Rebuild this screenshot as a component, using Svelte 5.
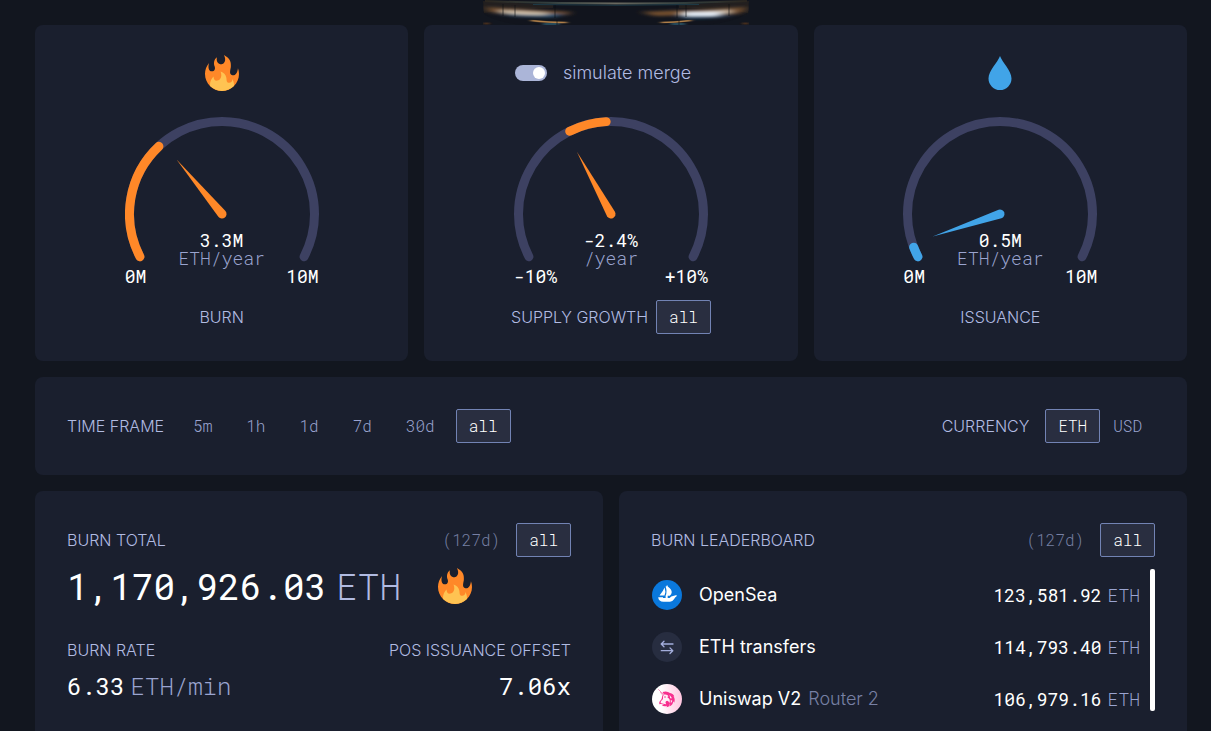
<script>
  const frames = ['5m', '1h', '1d', '7d', '30d', 'all'];
  const currencies = ['ETH', 'USD'];
  let frame = $state('all');
  let currency = $state('ETH');
  let merge = $state(true);

  // Gauge angles are in degrees, clockwise from the top of the dial.
  const R = 92.5;
  const CX = 97;
  const CY = 97;
  const END = 117.5;
  const point = (deg) => {
    const a = (deg * Math.PI) / 180;
    return `${(CX + R * Math.sin(a)).toFixed(2)} ${(CY - R * Math.cos(a)).toFixed(2)}`;
  };
  const arc = (from, to) =>
    `M${point(from)}A${R} ${R} 0 ${to - from > 180 ? 1 : 0} 1 ${point(to)}`;

  const leaders = [
    { icon: 'opensea', name: 'OpenSea', detail: '', amount: '123,581.92' },
    { icon: 'transfer', name: 'ETH transfers', detail: '', amount: '114,793.40' },
    { icon: 'uniswap', name: 'Uniswap V2', detail: 'Router 2', amount: '106,979.16' },
  ];
</script>

{#snippet flame()}
  <svg class="flame" viewBox="0 0 36 36" aria-hidden="true">
    <path fill="#ff8828" d="M35 19c0-2.062-.367-4.039-1.04-5.868-.46 5.389-3.333 8.157-6.335 6.868-2.812-1.208-.917-5.917-.777-8.164.236-3.809-.012-8.169-6.931-11.794 2.875 5.5.333 8.917-2.333 9.125-2.958.231-5.667-2.542-4.667-7.042-3.238 2.386-3.332 6.402-2.333 9 1.042 2.708-.042 4.958-2.583 5.208-2.84.28-4.418-3.041-2.963-8.333C2.52 10.965 1 14.805 1 19c0 9.389 7.611 17 17 17s17-7.611 17-17z"/>
    <path fill="#ffc352" d="M28.394 23.999c.148 3.084-2.561 4.293-4.019 3.709-2.106-.843-1.541-2.291-2.083-5.291s-2.625-5.083-5.708-6c2.25 6.333-1.247 8.667-3.08 9.084-1.872.426-3.753-.001-3.968-4.007C7.352 23.668 6 26.676 6 30c0 .368.023.73.055 1.09C9.125 34.124 13.342 36 18 36s8.875-1.876 11.945-4.91c.032-.36.055-.722.055-1.09 0-2.187-.584-4.236-1.606-6.001z"/>
  </svg>
{/snippet}

{#snippet gauge(tone, from, to, needle, value, unit, min, max)}
  <div class="gauge {tone}">
    <svg viewBox="0 0 194 145" aria-hidden="true">
      <path class="track" d={arc(-END, END)} />
      <path class="range" d={arc(from, to)} />
      <path class="needle" transform="rotate({needle} {CX} {CY})" d="M92.5 97L97 26L101.5 97A4.5 4.5 0 0 1 92.5 97Z" />
    </svg>
    <div class="reading">
      <span>{value}</span>
      <span class="unit">{unit}</span>
      <div class="limits"><span>{min}</span><span>{max}</span></div>
    </div>
  </div>
{/snippet}

<svg class="glass" viewBox="0 0 266 25" aria-hidden="true">
  <defs>
    <linearGradient id="rim" x1="0" x2="1">
      <stop offset="0" stop-color="#2a251f" />
      <stop offset=".25" stop-color="#33403f" />
      <stop offset=".5" stop-color="#6a695f" />
      <stop offset=".75" stop-color="#33403f" />
      <stop offset="1" stop-color="#2a251f" />
    </linearGradient>
    <filter id="soft" x="-20%" y="-80%" width="140%" height="260%"><feGaussianBlur stdDeviation="4 1.5" /></filter>
    <filter id="fine" x="-20%" y="-80%" width="140%" height="260%"><feGaussianBlur stdDeviation="2 .6" /></filter>
  </defs>
  <path fill="#11141d" d="M0 0H266L264 14Q250 22 224 25H40Q12 22 1 14Z" />
  <path fill="#221f1f" d="M0 1Q30 3 70 5V8Q30 8 1 13ZM266 1Q236 3 196 5V8Q236 8 265 13Z" />
  <path fill="none" stroke="url(#rim)" stroke-width="2" d="M2 1Q60 3.5 133 3.5T264 1" />
  <path fill="none" stroke="#1d3a47" d="M50 4.5Q133 6 216 4.5" />
  <g filter="url(#soft)">
    <path fill="#74502f" d="M2 7Q40 9 88 12L84 15L10 13ZM264 7Q226 9 158 12L172 16L256 14Z" />
    <path fill="#2c5a7c" d="M16 14H82L72 17Q38 18 16 14ZM250 15H192L202 18.5Q232 19 250 15Z" />
    <path fill="#d8cab6" opacity=".9" d="M16 10Q46 11 68 13L62 15Q40 16 18 13ZM248 10Q226 11 194 13L202 16Q228 16 248 13Z" />
    <path fill="#e6eef6" d="M202 12H240L234 16H202Z" />
  </g>
  <g filter="url(#fine)">
    <path fill="none" stroke="#b18048" stroke-width="1.4" d="M48 20.5Q64 22.5 84 22.5M178 22.5Q192 22.5 208 20.5" />
    <path fill="none" stroke="#3a7c96" d="M60 24H76M188 24H202" />
    <path fill="none" stroke="#54351f" stroke-width="2" d="M1 23.5H6M260 23.5H265" />
  </g>
  <path fill="none" stroke="#0b0d13" opacity=".6" d="M20 4V16M32 5V17M72 5V18M74 20V25M194 5V18M196 20V25M203 5V17M246 4V16" />
</svg>

<main>
  <div class="gauges">
    <section class="card dial">
      <div class="top">{@render flame()}</div>
      {@render gauge('orange', -END, -43, -39.8, '3.3M', 'ETH/year', '0M', '10M')}
      <div class="caption"><h2>BURN</h2></div>
    </section>

    <section class="card dial">
      <div class="top">
        <label class="merge">
          <input type="checkbox" role="switch" bind:checked={merge} />
          simulate merge
        </label>
      </div>
      {@render gauge('orange', -26.5, -3, -28.7, '-2.4%', '/year', '-10%', '+10%')}
      <div class="caption"><h2>SUPPLY GROWTH</h2><button class="pill active">{frame}</button></div>
    </section>

    <section class="card dial">
      <div class="top">
        <svg class="drop" viewBox="0 0 24 34" aria-hidden="true">
          <path fill="#41a4e8" d="M12 0C14 6 23.5 14.5 23.5 22.5A11.5 11.5 0 0 1 .5 22.5C.5 14.5 10 6 12 0Z" />
        </svg>
      </div>
      {@render gauge('blue', -END, -111, -108.5, '0.5M', 'ETH/year', '0M', '10M')}
      <div class="caption"><h2>ISSUANCE</h2></div>
    </section>
  </div>

  <section class="card controls">
    <div class="group">
      <h2>TIME FRAME</h2>
      <div class="frames">
        {#each frames as f}
          <button class="pill" class:active={frame === f} onclick={() => (frame = f)}>{f}</button>
        {/each}
      </div>
    </div>
    <div class="group">
      <h2>CURRENCY</h2>
      <div class="currencies">
        {#each currencies as c}
          <button class="pill" class:active={currency === c} onclick={() => (currency = c)}>{c}</button>
        {/each}
      </div>
    </div>
  </section>

  <div class="details">
    <section class="card">
      <header>
        <h2>BURN TOTAL</h2>
        <span class="days">(127d)</span>
        <button class="pill active">{frame}</button>
      </header>
      <div class="total">
        <p class="huge">1,170,926.03<span class="coin">ETH</span></p>
        {@render flame()}
      </div>
      <div class="stats">
        <div>
          <h2>BURN RATE</h2>
          <p class="big">6.33<span class="coin">ETH/min</span></p>
        </div>
        <div class="right">
          <h2>POS ISSUANCE OFFSET</h2>
          <p class="big">7.06x</p>
        </div>
      </div>
    </section>

    <section class="card">
      <header>
        <h2>BURN LEADERBOARD</h2>
        <span class="days">(127d)</span>
        <button class="pill active">{frame}</button>
      </header>
      <div class="board">
        <ul>
          {#each leaders as row}
            <li>
              <svg class="logo" viewBox="0 0 30 30" aria-hidden="true">
                {#if row.icon === 'opensea'}
                  <circle cx="15" cy="15" r="15" fill="#0a78dc" />
                  <path fill="#fff" d="M7.5 15.6Q11 11.5 12.6 7.6Q14.2 12 12.5 15.6ZM13.6 6.5L14.6 6.2V5.6H15.7V6.5Q20 9.5 19.7 12.5Q19.5 14.5 17.8 15.8H15.7V18H17.6L19.3 16.5L24.6 15.1V16.2Q23 17 22 19.3Q20.6 21.7 18 21.8H11.5Q6.5 21.5 6.2 17.2H11V18H13.6V15.8Q15.5 11.5 13.6 6.5Z" />
                {:else if row.icon === 'transfer'}
                  <circle cx="15" cy="15" r="15" fill="#272d40" />
                  <path fill="none" stroke="#a3addb" stroke-width="1.3" stroke-linecap="round" stroke-linejoin="round" d="M21 12H9.3M12 9.2L9.2 12L12 14.8M9.3 18.7H20.8M18 15.9L20.8 18.7L18 21.5" />
                {:else}
                  <defs>
                    <linearGradient id="uni" x1="0" x2="1"><stop offset=".3" stop-color="#fff" /><stop offset="1" stop-color="#ffc4df" /></linearGradient>
                  </defs>
                  <circle cx="15" cy="15" r="15" fill="url(#uni)" />
                  <path fill="none" stroke="#f58ab9" stroke-width=".9" stroke-linecap="round" d="M6.5 5.5L11.5 10.5M8.5 8.5L11.5 12" />
                  <path fill="#f8308f" d="M10.5 8Q15 6.5 18 9Q21.5 9.5 22.3 12.5L21.5 12.3Q23.5 15 22.2 18.8L21.2 17.3Q21 21 17.5 22.5Q18.8 20.5 17.6 19.2Q18.5 22.5 14.5 23.2L15 21.7Q12 23.2 9.8 20.9L12.3 20.8Q9 19.5 7.3 20.3Q6.8 17.5 9.6 15L10.3 11.8L12 10.5Z" />
                  <path fill="#fff0f7" d="M12 10.6Q15.5 10 16.5 12.3Q15.5 12.3 15.5 13.5Q19 15 17.3 19Q16.2 16 14 17.2Q12.8 18.2 14.2 20.2Q11 19.6 8.6 18.9L8.9 17.3L11 15Q10.6 12 12 10.6ZM17.5 10.8L20 14.3L18.2 14.2ZM18.7 16L20.4 16.8L18.9 19.3Z" />
                  <circle cx="13" cy="13" r=".8" fill="#f8308f" />
                {/if}
              </svg>
              <span class="name">{row.name}</span>
              <span class="detail">{row.detail}</span>
              <span class="amount">{row.amount}<span class="coin">ETH</span></span>
            </li>
          {/each}
        </ul>
        <div class="thumb"></div>
      </div>
    </section>
  </div>
</main>

<style>
  :global(body) {
    background: #12161f;
    overflow: hidden;
  }
  :global(#app) {
    --label: #b1bbe2;
    --muted: #9aa4d0;
    --faint: #7780a4;
    --mono: "Roboto Mono", "Liberation Mono", monospace;
    --sans: Inter, Roboto, sans-serif;
    color: #fff;
    font: 300 18px/18px var(--sans);
  }
  .glass {
    display: block;
    width: 266px;
    height: 25px;
    margin: 0 auto;
    position: relative;
    left: 10px;
  }
  main {
    display: flex;
    flex-direction: column;
    gap: 16px;
    padding: 0 24px 0 35px;
  }
  h2, p, ul {
    margin: 0;
    padding: 0;
  }
  h2 {
    color: var(--label);
    font-size: 16px;
    font-weight: 300;
    line-height: 24px;
  }
  .card {
    box-sizing: border-box;
    padding: 32px;
    border-radius: 8px;
    background: #1a1f2e;
  }
  .gauges {
    display: grid;
    grid-template-columns: repeat(3, 1fr);
    gap: 16px;
  }
  .dial {
    display: flex;
    flex-direction: column;
    align-items: center;
    padding-bottom: 27px;
  }
  .top {
    display: flex;
    align-items: center;
    height: 32px;
    margin-bottom: 28px;
  }
  .flame {
    flex: none;
    width: 36px;
    height: 36px;
  }
  .drop {
    width: 24px;
    height: 34px;
  }
  .merge {
    display: flex;
    align-items: center;
    gap: 16px;
    padding-right: 16px;
    color: var(--label);
    line-height: 24px;
  }
  .merge input {
    appearance: none;
    display: flex;
    box-sizing: border-box;
    width: 32px;
    height: 16px;
    margin: 0;
    padding: 2px;
    border-radius: 8px;
    background: #3d4162;
  }
  .merge input::before {
    content: "";
    width: 12px;
    height: 12px;
    border-radius: 50%;
    background: #fff;
  }
  .merge input:checked {
    justify-content: flex-end;
    background: #abb5d8;
  }
  .gauge {
    width: 194px;
    --tone: #ff8828;
  }
  .gauge.blue {
    --tone: #41a4e8;
  }
  .gauge svg {
    display: block;
    width: 100%;
  }
  .track, .range {
    fill: none;
    stroke: #3d4162;
    stroke-width: 9;
    stroke-linecap: round;
  }
  .range {
    stroke: var(--tone);
  }
  .needle {
    fill: var(--tone);
  }
  .reading {
    display: flex;
    flex-direction: column;
    align-items: center;
    margin-top: -31px;
    font-family: var(--mono);
    font-weight: 400;
  }
  .unit {
    color: var(--muted);
    font-weight: 300;
  }
  .limits {
    display: flex;
    justify-content: space-between;
    align-self: stretch;
  }
  .caption {
    display: flex;
    align-items: center;
    gap: 8px;
    height: 34px;
    margin-top: 15px;
  }
  .pill {
    box-sizing: border-box;
    height: 34px;
    padding: 0 12px;
    border: 1px solid transparent;
    border-radius: 2px;
    background: none;
    color: var(--muted);
    font: 300 16px/24px var(--mono);
  }
  .pill.active {
    border-color: #7283b4;
    background: #292e40;
    color: #fff;
  }
  .controls, .group, .frames, .currencies, header {
    display: flex;
    align-items: center;
  }
  .controls {
    justify-content: space-between;
  }
  .group {
    gap: 16px;
  }
  .frames {
    gap: 8px;
  }
  .details {
    display: grid;
    grid-template-columns: repeat(2, 1fr);
    gap: 16px;
  }
  .details .card {
    height: 256px;
  }
  .days {
    margin: 0 16px 0 auto;
    color: var(--faint);
    font: 300 16px/24px var(--mono);
  }
  .total {
    display: flex;
    align-items: center;
    gap: 36px;
    height: 58px;
  }
  .huge {
    font: 400 36px/40px var(--mono);
  }
  .coin {
    margin-left: 6px;
    color: var(--muted);
    font-weight: 300;
  }
  .huge .coin {
    margin-left: 10px;
    color: var(--label);
  }
  .stats {
    display: flex;
    justify-content: space-between;
    margin-top: 23px;
  }
  .right {
    text-align: right;
  }
  .big {
    margin-top: 8px;
    font: 400 24px/32px var(--mono);
  }
  .board {
    display: flex;
    gap: 10px;
    margin-top: 12px;
  }
  ul {
    flex: 1;
    display: flex;
    flex-direction: column;
    gap: 22px;
    padding-top: 11px;
    list-style: none;
  }
  li {
    display: flex;
    align-items: center;
    height: 30px;
  }
  .logo {
    width: 30px;
    height: 30px;
    margin: 0 17px 0 1px;
  }
  .name {
    font-weight: 400;
  }
  .detail {
    margin-left: 7px;
    color: var(--faint);
  }
  .amount {
    margin-left: auto;
    font-family: var(--mono);
    font-weight: 400;
  }
  .thumb {
    width: 5px;
    height: 142px;
    border-radius: 2px;
    background: #fff;
  }
</style>
